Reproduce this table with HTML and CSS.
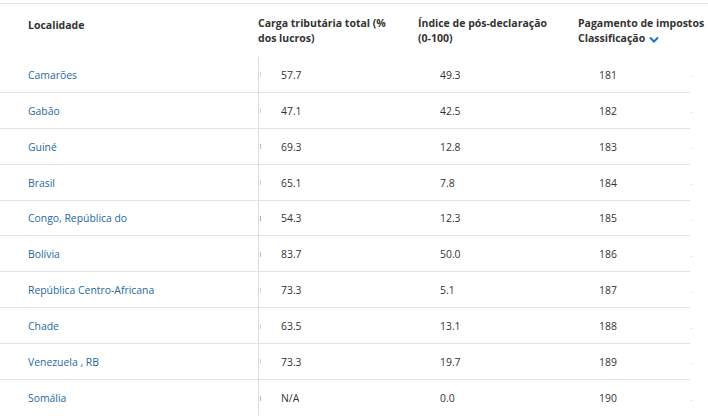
FILE: index.html
```html
<!DOCTYPE html>
<html lang="pt">
<head>
<meta charset="utf-8">
<link rel="stylesheet" href="styles.css">
</head>
<body>
<div class="table">
  <div class="row head">
    <div class="cell c1">Localidade</div>
    <div class="cell c2">Carga tributária total (% dos lucros)</div>
    <div class="cell c3">Índice de pós-declaração (0-100)</div>
    <div class="cell c4">Pagamento de impostos Classificação <svg class="chev" width="10" height="7" viewBox="0 0 10 7"><path d="M1 1.5 L5 5.5 L9 1.5" fill="none" stroke="#1f72c4" stroke-width="2"/></svg></div>
    <div class="cell c5"></div>
  </div>
  <div class="row"><div class="cell c1"><a>Camarões</a></div><div class="cell c2"><i class="frag gray"></i><span class="v">57.7</span></div><div class="cell c3">49.3</div><div class="cell c4">181</div><div class="cell c5">-</div></div>
  <div class="row"><div class="cell c1"><a>Gabão</a></div><div class="cell c2"><i class="frag gray"></i><span class="v">47.1</span></div><div class="cell c3">42.5</div><div class="cell c4">182</div><div class="cell c5">-</div></div>
  <div class="row"><div class="cell c1"><a>Guiné</a></div><div class="cell c2"><i class="frag red"></i><span class="v">69.3</span></div><div class="cell c3">12.8</div><div class="cell c4">183</div><div class="cell c5">-</div></div>
  <div class="row"><div class="cell c1"><a>Brasil</a></div><div class="cell c2"><i class="frag orange"></i><span class="v">65.1</span></div><div class="cell c3">7.8</div><div class="cell c4">184</div><div class="cell c5">-</div></div>
  <div class="row"><div class="cell c1"><a>Congo, República do</a></div><div class="cell c2"><i class="frag brown"></i><span class="v">54.3</span></div><div class="cell c3">12.3</div><div class="cell c4">185</div><div class="cell c5">-</div></div>
  <div class="row"><div class="cell c1"><a>Bolívia</a></div><div class="cell c2"><i class="frag red"></i><span class="v">83.7</span></div><div class="cell c3">50.0</div><div class="cell c4">186</div><div class="cell c5">-</div></div>
  <div class="row"><div class="cell c1"><a>República Centro-Africana</a></div><div class="cell c2"><i class="frag orange"></i><span class="v">73.3</span></div><div class="cell c3">5.1</div><div class="cell c4">187</div><div class="cell c5">-</div></div>
  <div class="row"><div class="cell c1"><a>Chade</a></div><div class="cell c2"><i class="frag gray"></i><span class="v">63.5</span></div><div class="cell c3">13.1</div><div class="cell c4">188</div><div class="cell c5">-</div></div>
  <div class="row"><div class="cell c1"><a>Venezuela , RB</a></div><div class="cell c2"><i class="frag gray"></i><span class="v">73.3</span></div><div class="cell c3">19.7</div><div class="cell c4">189</div><div class="cell c5">-</div></div>
  <div class="row last"><div class="cell c1"><a>Somália</a></div><div class="cell c2"><i class="frag blue"></i><span class="v">N/A</span></div><div class="cell c3">0.0</div><div class="cell c4">190</div><div class="cell c5">-</div></div>
</div>
</body>
</html>
```
FILE: styles.css
```css
html, body {
  margin: 0;
  padding: 0;
  background: #fff;
}
body {
  font-family: "Open Sans", "Noto Sans", sans-serif;
  font-size: 10.4px;
  color: #333;
  overflow: hidden;
}
.table {
  padding-top: 3px;
}
.row {
  display: grid;
  grid-template-columns: 258px 160px 160px 112px 18px;
  height: 35.875px;
  box-sizing: border-box;
  border-bottom: 1px solid #e3e3e3;
  width: 690px;
}
.row.last {
  border-bottom: none;
}
.row.head {
  height: 54px;
  width: 708px;
  border-top: 1px solid #e3e3e3;
  border-bottom: none;
  grid-template-columns: 258px 160px 160px 130px;
  font-weight: 700;
  font-size: 10.5px;
  line-height: 15px;
  color: #333;
}
.head .cell {
  align-items: flex-start;
  padding-top: 12px;
}
.head .c1 {
  padding-top: 14px;
}
.head .c2 {
  padding-left: 0;
  padding-right: 22px;
  border-left: none;
}
.head .c3 {
  padding-left: 0;
  padding-right: 20px;
}
.head .c4 {
  padding-left: 0;
  display: block;
}
.cell {
  display: flex;
  align-items: center;
  box-sizing: border-box;
  padding-top: 1px;
}
.c1 {
  padding-left: 28px;
}
.c1 a {
  color: #2569a4;
  text-decoration: none;
}
.c2 {
  border-left: 1px solid #dcdcdc;
  padding-left: 0;
}
.c3 {
  padding-left: 22px;
}
.c4 {
  padding-left: 21px;
}
.c5 {
  color: #d0d0d0;
  justify-content: flex-start;
  font-size: 8px;
}
.frag {
  display: inline-block;
  width: 1px;
  height: 5px;
  margin-left: 1px;
  opacity: 0.6;
}
.frag.gray { background: #bdbdbd; }
.frag.red { background: #d9763f; }
.frag.orange { background: #e6b27a; }
.frag.brown { background: #a86a3a; }
.frag.blue { background: #6a86c9; }
.v {
  margin-left: 20px;
}
.chev {
  vertical-align: middle;
  margin-left: 1px;
}
```
